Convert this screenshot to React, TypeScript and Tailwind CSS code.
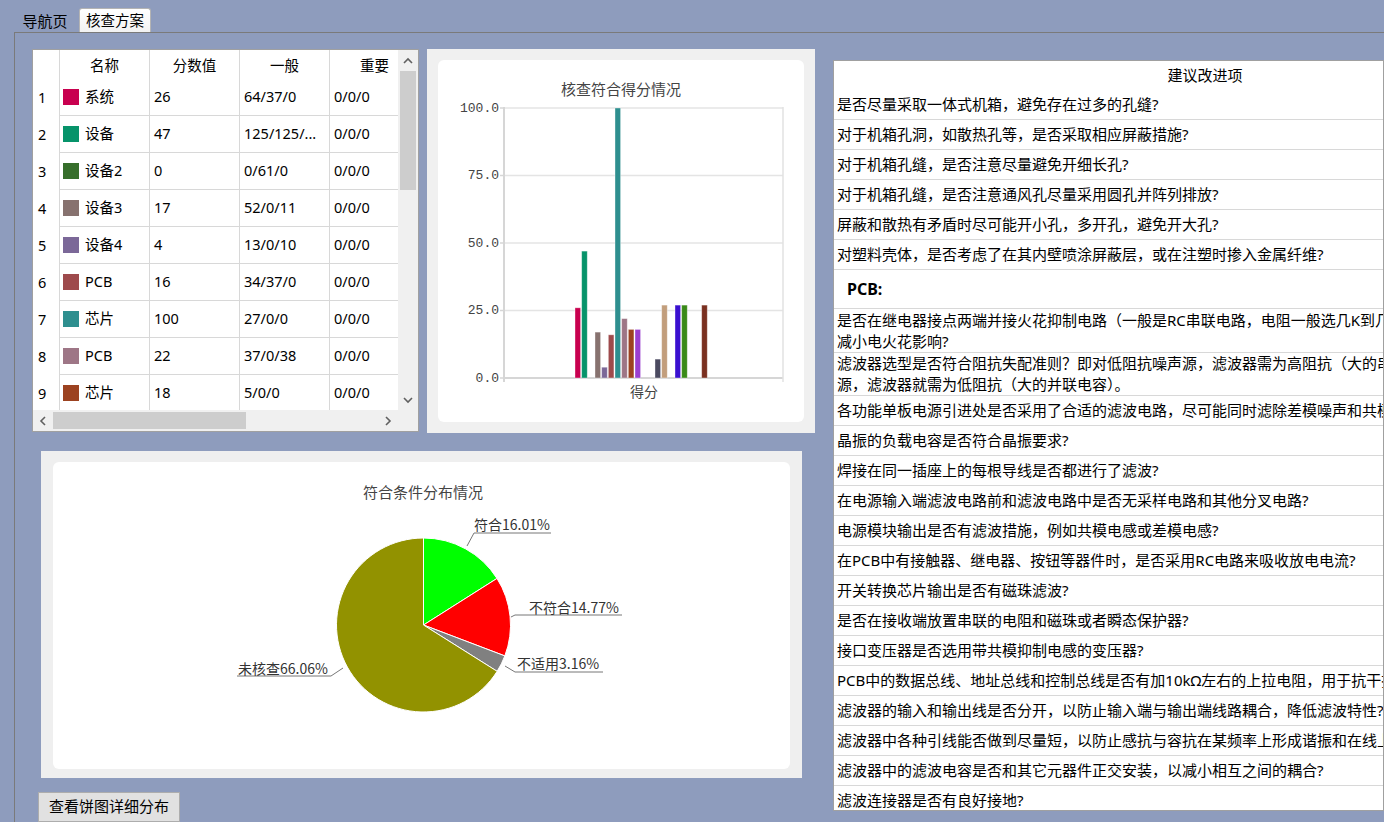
import { useMemo } from "react";

const TABLE_ROWS = [
  { id: 1, color: "#c8004f", name: "系统", score: "26", normal: "64/37/0", important: "0/0/0" },
  { id: 2, color: "#06936a", name: "设备", score: "47", normal: "125/125/...", important: "0/0/0" },
  { id: 3, color: "#366e2b", name: "设备2", score: "0", normal: "0/61/0", important: "0/0/0" },
  { id: 4, color: "#87726f", name: "设备3", score: "17", normal: "52/0/11", important: "0/0/0" },
  { id: 5, color: "#7b6898", name: "设备4", score: "4", normal: "13/0/10", important: "0/0/0" },
  { id: 6, color: "#9e4a4c", name: "PCB", score: "16", normal: "34/37/0", important: "0/0/0" },
  { id: 7, color: "#2e8f8f", name: "芯片", score: "100", normal: "27/0/0", important: "0/0/0" },
  { id: 8, color: "#9e7686", name: "PCB", score: "22", normal: "37/0/38", important: "0/0/0" },
  { id: 9, color: "#9c4220", name: "芯片", score: "18", normal: "5/0/0", important: "0/0/0" },
];

const BARS: [number, string][] = [
  [26, "#c8004f"],
  [47, "#06936a"],
  [0, "#366e2b"],
  [17, "#87726f"],
  [4, "#7b6898"],
  [16, "#9e4a4c"],
  [100, "#2e8f8f"],
  [22, "#9e7686"],
  [18, "#9c4220"],
  [18, "#9b3fcf"],
  [0, "#000"],
  [0, "#000"],
  [7, "#4b4a60"],
  [27, "#c29e7c"],
  [0, "#000"],
  [27, "#3a10d0"],
  [27, "#3a8a18"],
  [0, "#000"],
  [0, "#000"],
  [27, "#7a3020"],
];

const PIE = [
  { value: 16.01, color: "#00ff00" },
  { value: 14.77, color: "#ff0000" },
  { value: 3.16, color: "#808080" },
  { value: 66.06, color: "#929200" },
];

type Item = { lines: string[]; bold?: boolean; h?: string };

const SUGGESTIONS: Item[] = [
  { lines: ["是否尽量采取一体式机箱，避免存在过多的孔缝?"] },
  { lines: ["对于机箱孔洞，如散热孔等，是否采取相应屏蔽措施?"] },
  { lines: ["对于机箱孔缝，是否注意尽量避免开细长孔?"] },
  { lines: ["对于机箱孔缝，是否注意通风孔尽量采用圆孔并阵列排放?"] },
  { lines: ["屏蔽和散热有矛盾时尽可能开小孔，多开孔，避免开大孔?"] },
  { lines: ["对塑料壳体，是否考虑了在其内壁喷涂屏蔽层，或在注塑时掺入金属纤维?"] },
  { lines: ["PCB:"], bold: true },
  {
    lines: [
      "是否在继电器接点两端并接火花抑制电路（一般是RC串联电路，电阻一般选几K到几十K，电容选0.01uF），以",
      "减小电火花影响?",
    ],
    h: "h-[44px]",
  },
  {
    lines: [
      "滤波器选型是否符合阻抗失配准则？即对低阻抗噪声源，滤波器需为高阻抗（大的串联电感）；对高阻抗噪声",
      "源，滤波器就需为低阻抗（大的并联电容）。",
    ],
    h: "h-[43px]",
  },
  { lines: ["各功能单板电源引进处是否采用了合适的滤波电路，尽可能同时滤除差模噪声和共模噪声?"] },
  { lines: ["晶振的负载电容是否符合晶振要求?"] },
  { lines: ["焊接在同一插座上的每根导线是否都进行了滤波?"] },
  { lines: ["在电源输入端滤波电路前和滤波电路中是否无采样电路和其他分叉电路?"] },
  { lines: ["电源模块输出是否有滤波措施，例如共模电感或差模电感?"] },
  { lines: ["在PCB中有接触器、继电器、按钮等器件时，是否采用RC电路来吸收放电电流?"] },
  { lines: ["开关转换芯片输出是否有磁珠滤波?"] },
  { lines: ["是否在接收端放置串联的电阻和磁珠或者瞬态保护器?"] },
  { lines: ["接口变压器是否选用带共模抑制电感的变压器?"] },
  { lines: ["PCB中的数据总线、地址总线和控制总线是否有加10kΩ左右的上拉电阻，用于抗干扰?"] },
  { lines: ["滤波器的输入和输出线是否分开，以防止输入端与输出端线路耦合，降低滤波特性?"] },
  { lines: ["滤波器中各种引线能否做到尽量短，以防止感抗与容抗在某频率上形成谐振和在线上耦合?"] },
  { lines: ["滤波器中的滤波电容是否和其它元器件正交安装，以减小相互之间的耦合?"] },
  { lines: ["滤波连接器是否有良好接地?"] },
];

const Chevron = ({ dir }: { dir: "up" | "down" | "left" | "right" }) => {
  const pts = {
    up: "1,6 5,2 9,6",
    down: "1,2 5,6 9,2",
    left: "6,1 2,5 6,9",
    right: "2,1 6,5 2,9",
  }[dir];
  const vertical = dir === "up" || dir === "down";
  return (
    <svg width={vertical ? 10 : 8} height={vertical ? 8 : 10} viewBox={vertical ? "0 0 10 8" : "0 0 8 10"}>
      <polyline points={pts} fill="none" stroke="#606060" strokeWidth="1.6" />
    </svg>
  );
};

const ScoreTable = () => (
  <div className="w-[387px] h-[383px] border border-[#a0a0a0] bg-white flex flex-col text-[14.5px] text-black">
    <div className="flex flex-1 min-h-0">
      <div className="w-[365px] overflow-hidden">
        <div className="flex h-[29px] w-[440px]">
          <div className="w-[27px] border-r border-[#d8d8d8]" />
          {["名称", "分数值", "一般", "重要"].map((h) => (
            <div key={h} className="w-[90px] border-r border-[#d8d8d8] flex items-center justify-center pt-[2px]">
              {h}
            </div>
          ))}
        </div>
        {TABLE_ROWS.map((r) => (
          <div key={r.id} className="flex h-[37px] w-[440px]">
            <div className="w-[27px] border-r border-[#d8d8d8] flex items-center pl-[5px]">{r.id}</div>
            <div className="w-[90px] border-r border-b border-[#d8d8d8] flex items-center pl-[3px] gap-[6px]">
              <span className="w-[16px] h-[16px]" style={{ backgroundColor: r.color }} />
              <span>{r.name}</span>
            </div>
            <div className="w-[90px] border-r border-b border-[#d8d8d8] flex items-center pl-[4px]">{r.score}</div>
            <div className="w-[90px] border-r border-b border-[#d8d8d8] flex items-center pl-[4px] whitespace-nowrap">
              {r.normal}
            </div>
            <div className="w-[90px] border-r border-b border-[#d8d8d8] flex items-center pl-[4px]">{r.important}</div>
          </div>
        ))}
      </div>
      <div className="w-[20px] bg-[#f0f0f0] flex flex-col">
        <div className="h-[21px] flex items-center justify-center">
          <Chevron dir="up" />
        </div>
        <div className="flex-1 px-[2px]">
          <div className="h-[119px] bg-[#cdcdcd]" />
        </div>
        <div className="h-[21px] flex items-center justify-center">
          <Chevron dir="down" />
        </div>
      </div>
    </div>
    <div className="h-[21px] flex bg-[#f0f0f0]">
      <div className="w-[365px] flex items-center">
        <div className="w-[20px] flex items-center justify-center">
          <Chevron dir="left" />
        </div>
        <div className="w-[193px] h-[17px] bg-[#cdcdcd]" />
        <div className="flex-1" />
        <div className="w-[20px] flex items-center justify-center">
          <Chevron dir="right" />
        </div>
      </div>
      <div className="w-[20px]" />
    </div>
  </div>
);

const BarChart = () => {
  const y0 = 318;
  const k = 2.7;
  return (
    <svg width="366" height="362" viewBox="0 0 366 362">
      <text
        x="183"
        y="28"
        textAnchor="middle"
        dominantBaseline="central"
        fontSize="15"
        fill="#444"
        fontFamily="'Noto Sans CJK SC', sans-serif"
      >
        核查符合得分情况
      </text>
      {[0, 25, 50, 75, 100].map((v) => {
        const y = y0 - v * k;
        return (
          <g key={v}>
            <line x1="66" x2="345" y1={y} y2={y} stroke={v === 0 ? "#d6d6d6" : "#e4e4e4"} strokeWidth={v === 0 ? 2 : 1.6} />
            <line x1="62" x2="66" y1={y} y2={y} stroke="#d6d6d6" strokeWidth="1.5" />
            <text
              x="61"
              y={y}
              textAnchor="end"
              dominantBaseline="central"
              fontSize="13"
              fill="#444"
              fontFamily="'Liberation Mono', monospace"
            >
              {v.toFixed(1)}
            </text>
          </g>
        );
      })}
      <line x1="66" x2="66" y1="47" y2="322" stroke="#d6d6d6" strokeWidth="2" />
      <line x1="345" x2="345" y1="47" y2="322" stroke="#e2e2e2" strokeWidth="1.5" />
      {BARS.map(([v, c], i) =>
        v > 0 ? (
          <rect
            key={i}
            x={137 + i * 6.667}
            y={y0 - v * k}
            width="5.6"
            height={v * k}
            fill={c}
            stroke="#ffffff"
            strokeOpacity="0.45"
            strokeWidth="0.8"
          />
        ) : null
      )}
      <text
        x="206"
        y="331"
        textAnchor="middle"
        dominantBaseline="central"
        fontSize="14"
        fill="#444"
        fontFamily="'Noto Sans CJK SC', sans-serif"
      >
        得分
      </text>
    </svg>
  );
};

const PieChart = () => {
  const cx = 370.5;
  const cy = 163;
  const r = 87;
  const slices = useMemo(() => {
    let acc = 0;
    return PIE.map((s) => {
      const a0 = (acc / 100) * Math.PI * 2;
      acc += s.value;
      const a1 = (acc / 100) * Math.PI * 2;
      const p0 = [cx + r * Math.sin(a0), cy - r * Math.cos(a0)];
      const p1 = [cx + r * Math.sin(a1), cy - r * Math.cos(a1)];
      const large = a1 - a0 > Math.PI ? 1 : 0;
      return { d: `M${cx},${cy} L${p0[0]},${p0[1]} A${r},${r} 0 ${large} 1 ${p1[0]},${p1[1]} Z`, color: s.color };
    });
  }, []);

  const labels = [
    { text: "符合16.01%", tx: 421, ty: 62, lead: "414,84 421,71 498,71" },
    { text: "不符合14.77%", tx: 476, ty: 145, lead: "458,155 462,153 569,153" },
    { text: "不适用3.16%", tx: 464, ty: 201, lead: "452,204 462,210 550,210" },
    { text: "未核查66.06%", tx: 185, ty: 206, lead: "290,206 278,214 184,214" },
  ];

  return (
    <svg width="737" height="307" viewBox="0 0 737 307">
      <text
        x="370"
        y="29"
        textAnchor="middle"
        dominantBaseline="central"
        fontSize="15"
        fill="#444"
        fontFamily="'Noto Sans CJK SC', sans-serif"
      >
        符合条件分布情况
      </text>
      {slices.map((s, i) => (
        <path key={i} d={s.d} fill={s.color} stroke="#ffffff" strokeWidth="1" />
      ))}
      {labels.map((l) => (
        <g key={l.text}>
          <polyline points={l.lead} fill="none" stroke="#777" strokeWidth="1" />
          <text
            x={l.tx}
            y={l.ty}
            dominantBaseline="central"
            fontSize="14"
            fill="#333"
            fontFamily="'Noto Sans CJK SC', sans-serif"
          >
            {l.text}
          </text>
        </g>
      ))}
    </svg>
  );
};

const SuggestionPanel = () => (
  <div className="flex-1 mt-[27px] h-[751px] border border-[#a0a0a0] bg-white overflow-hidden text-[15px] text-black">
    <div className="w-[742px]">
      <div className="h-[28px] flex items-center justify-center pt-[1px]">建议改进项</div>
      {SUGGESTIONS.map((s, i) => {
        const edge = i === 0 ? "" : " border-t border-[#d8d8d8]";
        if (s.bold) {
          return (
            <div key={i} className={"h-[39px] flex items-center pl-[13px] text-[16px] font-bold" + edge}>
              PCB:
            </div>
          );
        }
        const multi = s.lines.length > 1;
        return (
          <div
            key={i}
            className={
              (multi
                ? (s.h ?? "h-[44px]") + " flex flex-col justify-center pl-[3px] leading-[21px]"
                : "h-[30px] flex flex-col justify-center pl-[3px]") + edge
            }
          >
            {s.lines.map((line, j) => (
              <div key={j} className="whitespace-nowrap">
                {line}
              </div>
            ))}
          </div>
        );
      })}
    </div>
  </div>
);

export default function App() {
  return (
    <div className="w-[1384px] h-[822px] overflow-hidden bg-[#8e9cbd] font-['Noto_Sans','Noto_Sans_CJK_SC',sans-serif] flex flex-col">
      <div className="h-[32px] flex items-end shrink-0">
        <div className="ml-[14px] w-[62px] h-[22px] flex items-center justify-center text-[15px] text-black">导航页</div>
        <div className="ml-[3px] w-[72px] h-[24px] rounded-t-[3px] border border-b-0 border-[#b4b4b4] bg-gradient-to-b from-white to-[#f2f2f2] flex items-center justify-center text-[14.5px] text-black">
          核查方案
        </div>
      </div>
      <div className="ml-[14px] flex-1 border-l border-t border-[#7a7a7a] flex min-h-0">
        <div className="w-[818px] shrink-0 pl-[17px] pt-[16px] flex flex-col">
          <div className="flex gap-[8px] items-start">
            <ScoreTable />
            <div className="w-[388px] h-[384px] bg-[#f0f0f0] p-[11px]">
              <div className="w-[366px] h-[362px] bg-white rounded-[6px]">
                <BarChart />
              </div>
            </div>
          </div>
          <div className="ml-[9px] mt-[18px] w-[761px] h-[330px] bg-[#efefef] pt-[11px] pl-[12px]">
            <div className="w-[737px] h-[307px] bg-white rounded-[6px]">
              <PieChart />
            </div>
          </div>
          <button className="ml-[6px] mt-[14px] w-[142px] h-[30px] bg-[#e1e1e1] border border-[#adadad] text-[15px] text-black text-left pl-[10px] pb-[2px]">
            查看饼图详细分布
          </button>
        </div>
        <SuggestionPanel />
      </div>
    </div>
  );
}
